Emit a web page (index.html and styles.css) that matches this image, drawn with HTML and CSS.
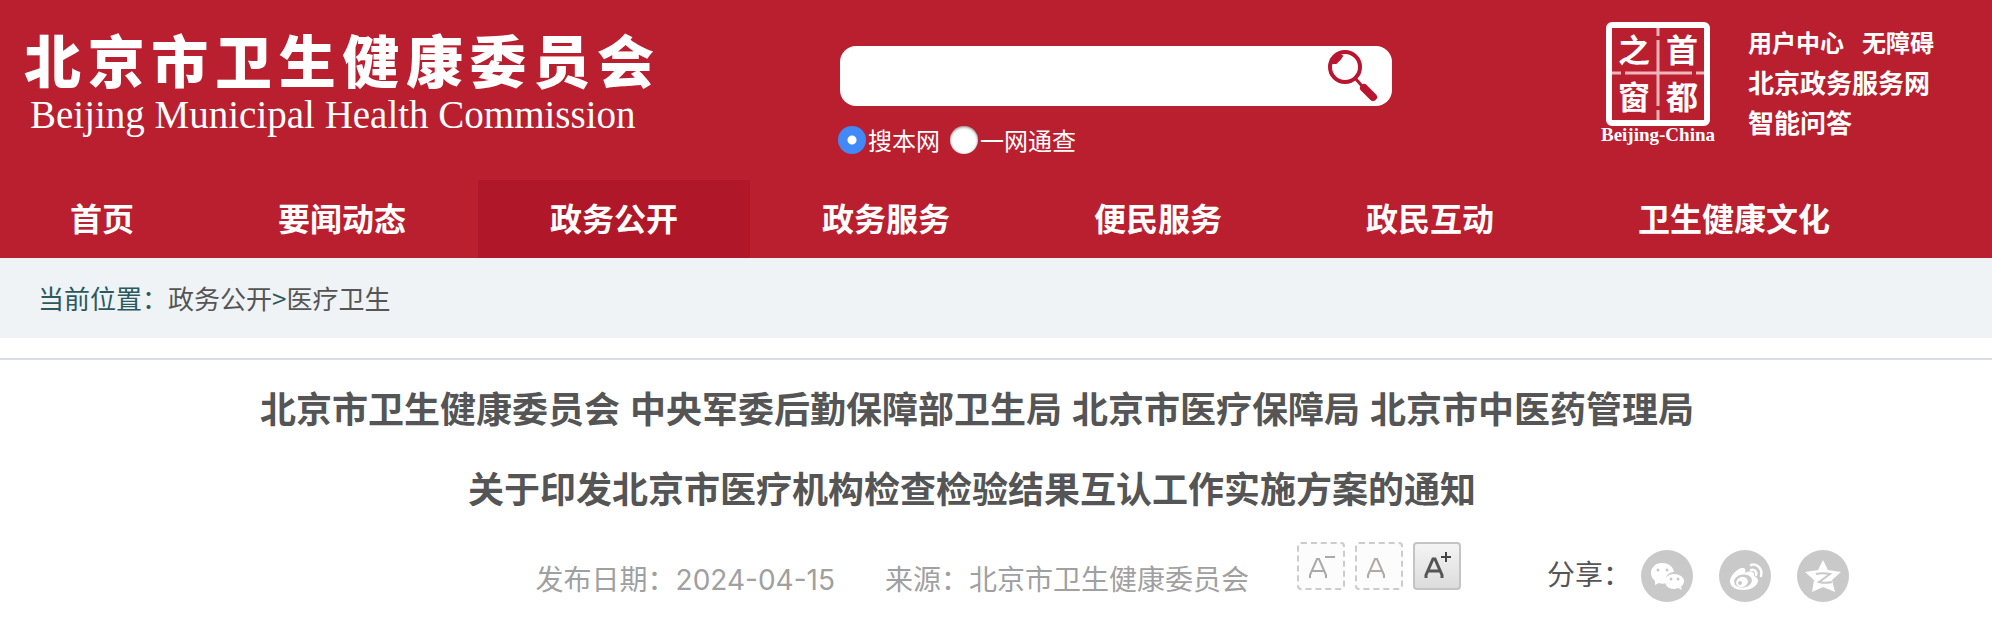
FILE: index.html
```
<!DOCTYPE html>
<html lang="zh-CN">
<head>
    <meta charset="UTF-8">
    <meta name="viewport" content="width=device-width, initial-scale=1.0">
    <title>北京市卫生健康委员会</title>
    <link rel="stylesheet" href="styles.css">
</head>
<body>

<header class="header">
    <div class="top">
        <a href="#" class="logo">
            <span class="logo-cn"><span>北</span><span>京</span><span>市</span><span>卫</span><span>生</span><span>健</span><span>康</span><span>委</span><span>员</span><span>会</span></span>
            <span class="logo-en">Beijing Municipal Health Commission</span>
        </a>

        <form class="search">
            <div class="search-box">
                <input type="text" class="search-input" name="q" aria-label="搜索">
                <button type="submit" class="search-btn" aria-label="搜索">
                    <svg width="52" height="54" viewBox="0 0 52 54">
                        <circle cx="17" cy="18" r="15" fill="none" stroke="#b9152f" stroke-width="4"/>
                        <path d="M4 14L11 5L14 7L12 10L8 14Z" fill="#b9152f" stroke="#b9152f" stroke-width="2"/>
                        <path d="M27 29L34 37" stroke="#b9152f" stroke-width="3"/>
                        <path d="M36 39L45 48" stroke="#b9152f" stroke-width="8" stroke-linecap="round"/>
                    </svg>
                </button>
            </div>
            <div class="search-type">
                <input type="radio" id="site" name="type" checked>
                <label for="site">搜本网</label>
                <input type="radio" id="all" name="type">
                <label for="all">一网通查</label>
            </div>
        </form>

        <div class="right">
            <a href="#" class="emblem">
                <svg width="104" height="104" viewBox="0 0 104 104">
                    <rect x="3" y="3" width="98" height="98" rx="3" fill="none" stroke="#fff" stroke-width="6"/>
                    <path d="M52 6V14M52 18V84M52 88V98M6 51H15M19 51H86M90 51H98" stroke="#f0b4bb" stroke-width="3"/>
                    <g fill="#fff" font-size="32" font-weight="bold" text-anchor="middle">
                        <text x="28" y="40">之</text>
                        <text x="76" y="40">首</text>
                        <text x="28" y="87">窗</text>
                        <text x="76" y="87">都</text>
                    </g>
                </svg>
                <span class="emblem-text">Beijing-China</span>
            </a>
            <ul class="links">
                <li class="links-small"><a href="#">用户中心</a><a href="#">无障碍</a></li>
                <li><a href="#">北京政务服务网</a></li>
                <li><a href="#">智能问答</a></li>
            </ul>
        </div>
    </div>

    <nav class="nav">
        <a href="#">首页</a>
        <a href="#">要闻动态</a>
        <a href="#" class="active">政务公开</a>
        <a href="#">政务服务</a>
        <a href="#">便民服务</a>
        <a href="#">政民互动</a>
        <a href="#">卫生健康文化</a>
    </nav>
</header>

<div class="position">当前位置：<a href="#">政务公开</a>&gt;<a href="#">医疗卫生</a></div>

<main class="article">
    <h1>北京市卫生健康委员会 中央军委后勤保障部卫生局 北京市医疗保障局 北京市中医药管理局<br>关于印发北京市医疗机构检查检验结果互认工作实施方案的通知&nbsp;</h1>

    <div class="info">
        <span class="date">发布日期：<span class="num">2024-04-15</span></span>
        <span class="source">来源：北京市卫生健康委员会</span>

        <div class="font-size">
            <button type="button" aria-label="缩小字号">
                <svg width="48" height="48" viewBox="0 0 48 48" fill="none">
                    <path d="M13 36V33L20 17H22L29 33V36M15 29H27" stroke="#aaa" stroke-width="2"/>
                    <path d="M28 15H38" stroke="#aaa" stroke-width="2"/>
                </svg>
            </button>
            <button type="button" aria-label="默认字号">
                <svg width="48" height="48" viewBox="0 0 48 48" fill="none">
                    <path d="M13 36V33L20 17H22L29 33V36M15 29H27" stroke="#b0aaa4" stroke-width="2"/>
                </svg>
            </button>
            <button type="button" class="on" aria-label="放大字号">
                <svg width="48" height="48" viewBox="0 0 48 48" fill="none">
                    <path d="M13 36V33L20 17H22L29 33V36M15 29H27" stroke="#555" stroke-width="3"/>
                    <path d="M28 15H38M33 10V20" stroke="#444" stroke-width="2"/>
                </svg>
            </button>
        </div>

        <div class="share">
            <span class="share-label">分享：</span>
            <a href="#" aria-label="微信">
                <svg width="52" height="52" viewBox="0 0 52 52">
                    <path d="M21 13C14 13 10 18 10 23C10 27 12 29 14 31L14 35L18 33C20 34 23 34 25 33C23 26 28 22 33 22C32 16 27 13 21 13Z" fill="#fff"/>
                    <path d="M33 24C28 24 24 27 24 31C24 36 28 39 33 39C35 39 36 38 37 38L41 40L40 37C42 35 43 33 43 31C43 27 38 24 33 24Z" fill="#fff"/>
                    <g fill="#c9c9c9"><circle cx="17" cy="20" r="1.5"/><circle cx="26" cy="20" r="1.5"/><circle cx="30" cy="29" r="1.5"/><circle cx="37" cy="29" r="1.5"/></g>
                </svg>
            </a>
            <a href="#" aria-label="微博">
                <svg width="52" height="52" viewBox="0 0 52 52">
                    <path d="M24 18C20 17 11 25 11 31C11 37 17 40 24 40C33 40 39 35 39 31C39 28 37 27 35 26C36 22 32 20 26 23C27 20 26 18 24 18Z" fill="#fff"/>
                    <ellipse cx="24" cy="31" rx="9" ry="6.5" fill="#c9c9c9" transform="rotate(-8 24 31)"/>
                    <ellipse cx="23" cy="32" rx="6" ry="5" fill="#fff" transform="rotate(-20 23 32)"/>
                    <circle cx="21" cy="33" r="2" fill="#c9c9c9"/>
                    <path d="M32 15C38 13 44 19 42 26M32 20C36 19 38 22 37 25" fill="none" stroke="#fff" stroke-width="2.5" stroke-linecap="round"/>
                </svg>
            </a>
            <a href="#" aria-label="QQ空间">
                <svg width="52" height="52" viewBox="0 0 52 52">
                    <path d="M26 10L31 20L44 22L35 30L38 42L26 37L15 42L17 30L8 22L21 20Z" fill="#fff"/>
                    <path d="M19 24C24 23 28 23 33 24L22 32C26 33 31 33 35 32" fill="none" stroke="#c9c9c9" stroke-width="2"/>
                </svg>
            </a>
        </div>
    </div>
</main>

</body>
</html>
```
FILE: styles.css
```
* {
    box-sizing: border-box;
}
body {
    margin: 0;
    font-family: "Noto Sans CJK SC", sans-serif;
    background-color: #fff;
    color: #555;
}
a {
    color: inherit;
    text-decoration: none;
}
.header {
    background-color: #ba1f30;
    color: #fff;
}
.top {
    display: flex;
    align-items: flex-start;
    height: 180px;
    padding: 22px 58px 0 24px;
}
.logo {
    display: flex;
    flex-direction: column;
    width: 630px;
    white-space: nowrap;
}
.logo-cn {
    display: flex;
    justify-content: space-between;
    font-size: 57px;
    font-weight: 900;
    line-height: 72px;
}
.logo-en {
    padding-left: 6px;
    font-family: "Liberation Serif", serif;
    font-size: 39px;
    line-height: 42px;
}
.search {
    width: 554px;
    margin-left: 184px;
    padding-top: 24px;
}
.search-box {
    display: flex;
    align-items: center;
    height: 60px;
    margin-left: 2px;
    padding-right: 12px;
    background-color: #fff;
    border-radius: 16px;
}
.search-input {
    flex: 1;
    height: 60px;
    padding: 0 16px;
    border: none;
    background: none;
    outline: none;
    font-size: 24px;
}
.search-btn {
    width: 52px;
    height: 54px;
    padding: 0;
    border: none;
    background: none;
    cursor: pointer;
}
.search-type {
    display: flex;
    align-items: center;
    margin-top: 20px;
    font-size: 24px;
    line-height: 28px;
}
.search-type input {
    appearance: none;
    width: 28px;
    height: 28px;
    margin: 0 2px 0 0;
    border-radius: 50%;
    background-color: #fff;
    box-shadow: inset 0 1px 3px rgba(0, 0, 0, 0.5);
}
.search-type input:checked {
    background: radial-gradient(circle, #fff 4px, #4189f7 5px);
    box-shadow: none;
}
.search-type label {
    margin-right: 10px;
}
.right {
    display: flex;
    margin-left: auto;
}
.emblem {
    display: flex;
    flex-direction: column;
    align-items: center;
    width: 116px;
    margin-right: 32px;
}
.emblem svg {
    display: block;
}
.emblem-text {
    font-family: "Liberation Serif", serif;
    font-size: 19px;
    font-weight: bold;
    line-height: 18px;
}
.links {
    margin: 0;
    padding: 0;
    list-style: none;
    font-size: 26px;
    font-weight: bold;
    line-height: 40px;
}
.links-small {
    display: flex;
    gap: 18px;
    font-size: 24px;
}
.nav {
    display: flex;
    font-size: 32px;
    font-weight: bold;
    line-height: 74px;
}
.nav a {
    padding: 0 72px 4px;
    white-space: nowrap;
}
.nav a:first-child {
    padding-left: 70px;
}
.nav .active {
    background-color: #b0182a;
}
.position {
    padding: 0 38px;
    background-color: #eff3f6;
    color: #2b5a5e;
    font-size: 26px;
    line-height: 80px;
}
.position a {
    color: #555;
}
.article {
    margin-top: 20px;
    border-top: 2px solid #d8dee2;
}
.article h1 {
    margin: 0;
    padding: 11px 38px 0 0;
    font-family: "Liberation Sans", "Noto Sans CJK SC", sans-serif;
    font-size: 36px;
    line-height: 80px;
    text-align: center;
}
.info {
    display: flex;
    justify-content: flex-end;
    align-items: flex-start;
    padding: 11px 143px 20px 0;
    font-size: 28px;
    line-height: 40px;
    white-space: nowrap;
}
.date,
.source {
    padding-top: 16px;
    color: #a0a0a0;
}
.num {
    font-family: Inter, sans-serif;
}
.source {
    margin-left: 50px;
}
.font-size {
    display: flex;
    gap: 10px;
    margin-left: 48px;
}
.font-size button {
    width: 48px;
    height: 48px;
    padding: 0;
    border: 2px dashed #ccc;
    border-radius: 4px;
    background-color: #fcfcfc;
    cursor: pointer;
}
.font-size svg {
    display: block;
    margin: -2px;
}
.font-size .on {
    border: 2px solid #c4c4c4;
    background: linear-gradient(#f4f4f4, #dcdcdc);
}
.share {
    display: flex;
    align-items: flex-start;
    gap: 26px;
    margin-left: 86px;
    padding-top: 8px;
}
.share-label {
    margin-right: -16px;
    padding-top: 3px;
}
.share a {
    width: 52px;
    height: 52px;
    border-radius: 50%;
    background-color: #c9c9c9;
}
```
